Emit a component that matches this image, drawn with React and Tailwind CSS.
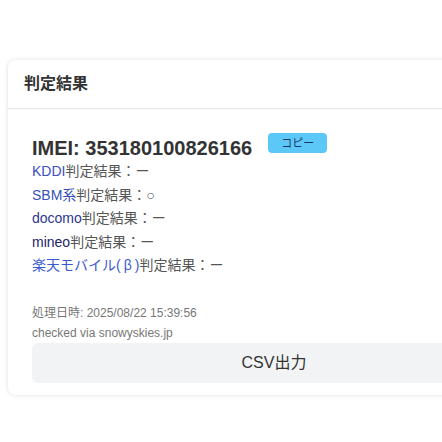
const results = [
  { label: 'KDDI', value: 'ー', color: 'text-[#3b4fc0]' },
  { label: 'SBM系', value: '○', color: 'text-[#3552b8]' },
  { label: 'docomo', value: 'ー', color: 'text-[#2b3990]' },
  { label: 'mineo', value: 'ー', color: 'text-[#23246b]' },
  { label: '楽天モバイル', beta: true, value: 'ー', color: 'text-[#3a5ad0]' },
]

export default function App() {
  return (
    <div
      className="w-full h-[442px] overflow-hidden bg-white pt-[60px] pl-[8px]"
      style={{ fontFamily: '"Liberation Sans", Arial, "Noto Sans CJK JP", sans-serif' }}
    >
      {/* result card */}
      <div className="w-[532px] bg-white rounded-lg shadow-[0_0_5px_rgba(0,0,0,0.12)]">
        <div className="px-4 py-3 border-b border-[#e6e8eb] shadow-[0_1px_2px_rgba(0,0,0,0.04)]">
          <h2 className="text-[16px] leading-6 font-bold text-[#333]">判定結果</h2>
        </div>

        <div className="px-6 pt-6 pb-3">
          <div className="flex items-start h-[27px]">
            <p className="text-[20px] leading-[30px] font-bold text-[#333]">IMEI: 353180100826166</p>
            <button className="ml-4 w-[59px] h-[20px] rounded-[4px] bg-[#5cc8f8] text-[11px] leading-[20px] text-[#1d3566]">
              コピー
            </button>
          </div>

          <div className="text-[14px] leading-[23.5px] text-[#555]">
            {results.map((r) => (
              <div key={r.label}>
                <span className={r.color}>
                  {r.label}
                  {r.beta && (
                    <>
                      <span className="tracking-[3px]">(β</span>)
                    </>
                  )}
                </span>
                判定結果：{r.value}
              </div>
            ))}
          </div>

          <div className="mt-[25px] text-[12px] leading-5 text-[#777]">
            <p>処理日時: 2025/08/22 15:39:56</p>
            <p>checked via snowyskies.jp</p>
          </div>

          <button className="w-full h-10 rounded-md bg-[#f1f3f5] text-[16px] text-[#333]">
            CSV出力
          </button>
        </div>
      </div>
    </div>
  )
}
